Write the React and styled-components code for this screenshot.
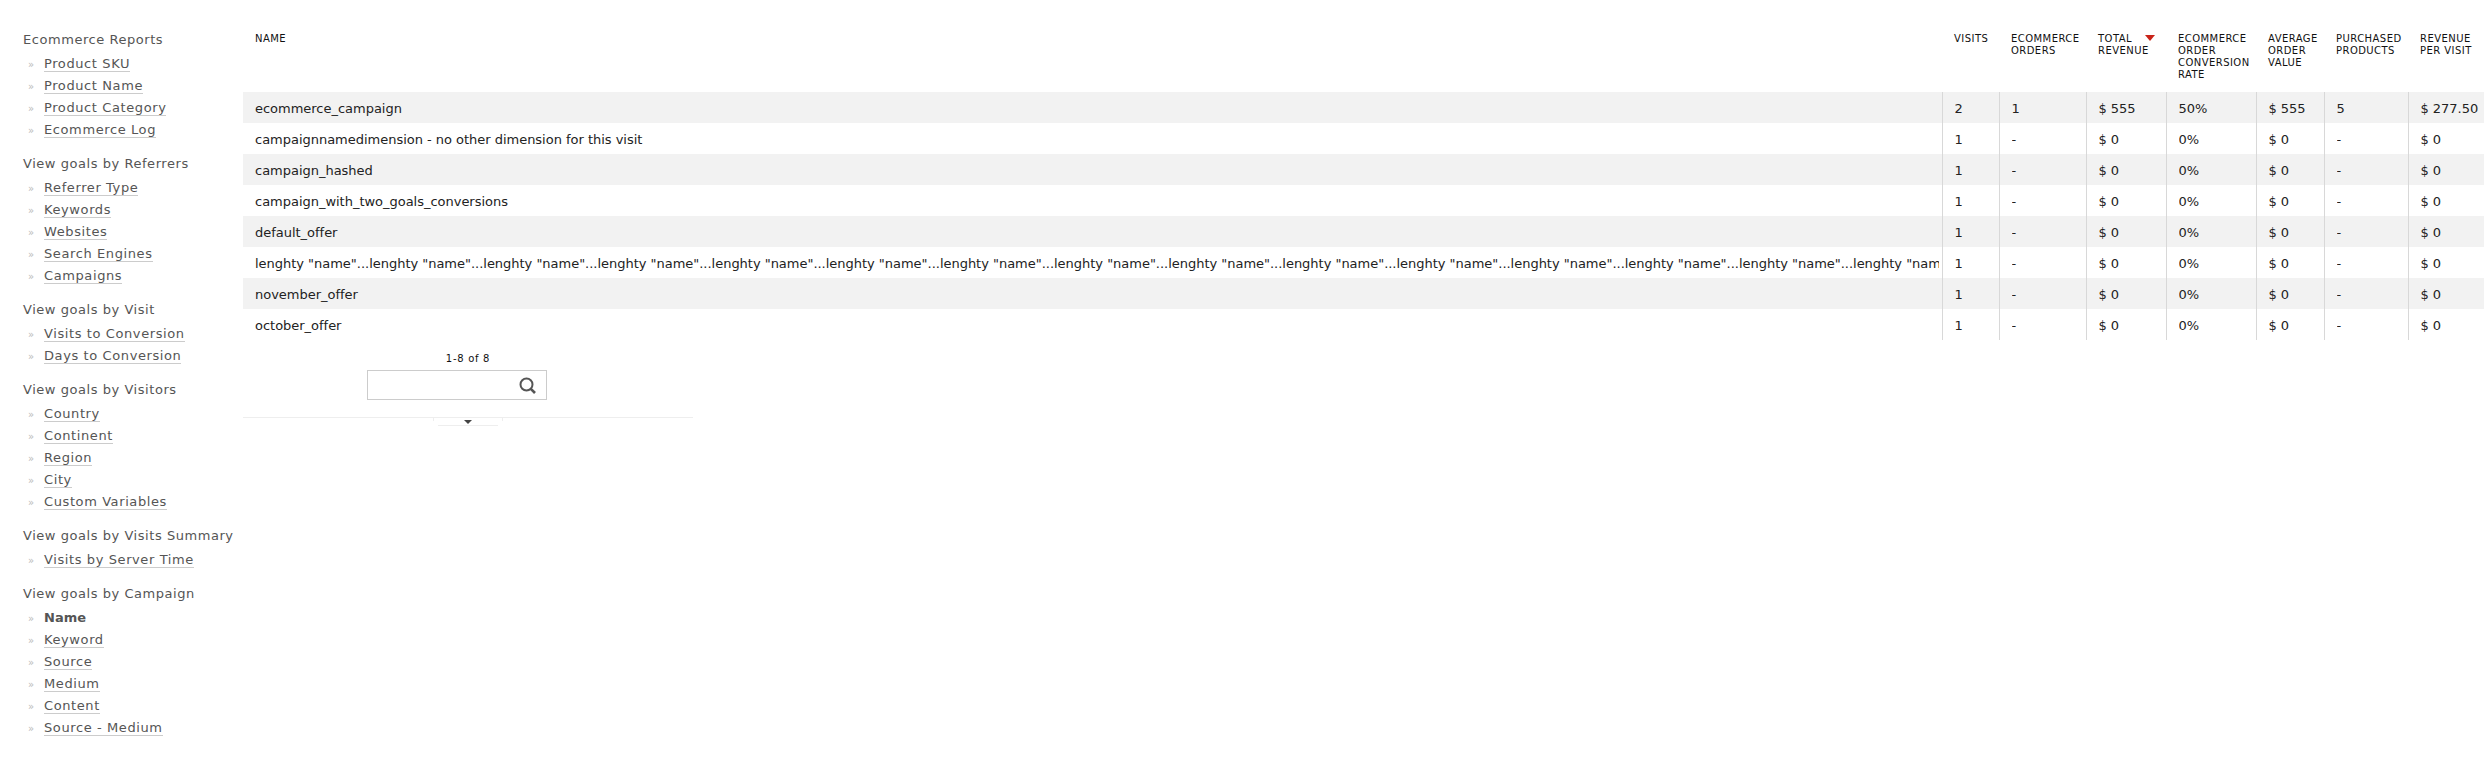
import React from "react";
import styled, { createGlobalStyle } from "styled-components";

const GlobalStyle = createGlobalStyle`
  html, body {
    margin: 0;
    overflow: hidden;
    background: #fff;
    font-family: "DejaVu Sans", Verdana, sans-serif;
  }
`;

const Page = styled.div`
  display: flex;
  align-items: flex-start;
  width: 2484px;
  height: 768px;
  overflow: hidden;
`;

const Sidebar = styled.nav`
  flex: 0 0 243px;
  box-sizing: border-box;
  padding: 29px 0 0 23px;
`;

const Group = styled.div`
  margin-bottom: 12px;
`;

const GroupTitle = styled.h3`
  margin: 0 0 2px;
  font-size: 13px;
  font-weight: normal;
  line-height: 22px;
  letter-spacing: 0.55px;
  color: #555;
  white-space: nowrap;
`;

const MenuList = styled.ul`
  list-style: none;
  margin: 0;
  padding: 0;
`;

const MenuItem = styled.li`
  display: flex;
  align-items: center;
  height: 22px;
  font-size: 13px;
  white-space: nowrap;

  &::before {
    content: "»";
    width: 21px;
    padding-left: 5px;
    box-sizing: border-box;
    font-size: 10px;
    color: #bbb;
  }
`;

const MenuLink = styled.a`
  color: #555;
  line-height: 15px;
  letter-spacing: ${(p) => (p.$active ? "0" : "0.6px")};
  border-bottom: ${(p) => (p.$active ? "1px solid transparent" : "1px solid #ccc")};
  font-weight: ${(p) => (p.$active ? "bold" : "normal")};
`;

const Content = styled.div`
  flex: 0 0 auto;
`;

const Table = styled.table`
  table-layout: fixed;
  width: 2248px;
  border-collapse: collapse;
`;

const HeadCell = styled.th`
  box-sizing: border-box;
  height: 92px;
  padding: 33px 0 0 12px;
  vertical-align: top;
  text-align: left;
  font-size: 10px;
  font-weight: normal;
  line-height: 12px;
  letter-spacing: 0.45px;
  text-transform: uppercase;
  color: #111;
`;

const SortArrow = styled.span`
  float: right;
  margin: 2px 11px 0 0;
  border-left: 5px solid transparent;
  border-right: 5px solid transparent;
  border-top: 6px solid #c92318;
`;

const Row = styled.tr`
  background: ${(p) => (p.$striped ? "#f2f2f2" : "#fff")};
`;

const Cell = styled.td`
  box-sizing: border-box;
  height: 31px;
  padding: 1px 3px 0 12px;
  overflow: hidden;
  white-space: nowrap;
  font-size: 13px;
  color: #222;

  & + & {
    border-left: 1px solid #d8d8d8;
  }
`;

const CellText = styled.span`
  display: block;
  overflow: hidden;
  letter-spacing: -0.02px;
`;

const Footer = styled.div`
  display: flex;
  flex-direction: column;
  align-items: center;
  width: 450px;
`;

const Pager = styled.div`
  margin-top: 13px;
  font-size: 10px;
  line-height: 12px;
  letter-spacing: 0.7px;
  color: #111;
`;

const SearchBox = styled.div`
  display: flex;
  align-items: center;
  justify-content: flex-end;
  box-sizing: border-box;
  width: 180px;
  height: 30px;
  margin: 5px 22px 0 0;
  padding-right: 10px;
  border: 1px solid #ccc;
  color: #555;
`;

const Expander = styled.div`
  display: flex;
  justify-content: center;
  align-self: stretch;
  margin-top: 17px;
  border-top: 1px solid #eee;
`;

const ExpandNotch = styled.div`
  position: relative;
  display: flex;
  justify-content: center;
  width: 70px;

  &::before,
  &::after {
    content: "";
    position: absolute;
    top: 0;
    width: 1px;
    height: 3px;
    background: #eee;
  }

  &::before {
    left: 0;
  }

  &::after {
    right: 0;
  }
`;

const ExpandTab = styled.div`
  display: flex;
  justify-content: center;
  box-sizing: border-box;
  width: 60px;
  height: 8px;
  padding-top: 2px;
  border-bottom: 1px solid #eee;
`;

const ExpandArrow = styled.span`
  width: 0;
  height: 0;
  border-left: 4px solid transparent;
  border-right: 4px solid transparent;
  border-top: 4px solid #444;
`;

const columns = [
  { label: "Name", width: 1699 },
  { label: "Visits", width: 57 },
  { label: "Ecommerce Orders", width: 87 },
  { label: "Total Revenue", width: 80, sorted: true },
  { label: "Ecommerce Order Conversion Rate", width: 90 },
  { label: "Average Order Value", width: 68 },
  { label: "Purchased Products", width: 84 },
  { label: "Revenue per visit", width: 83 },
];

const rows = [
  ["ecommerce_campaign", "2", "1", "$ 555", "50%", "$ 555", "5", "$ 277.50"],
  ["campaignnamedimension - no other dimension for this visit", "1", "-", "$ 0", "0%", "$ 0", "-", "$ 0"],
  ["campaign_hashed", "1", "-", "$ 0", "0%", "$ 0", "-", "$ 0"],
  ["campaign_with_two_goals_conversions", "1", "-", "$ 0", "0%", "$ 0", "-", "$ 0"],
  ["default_offer", "1", "-", "$ 0", "0%", "$ 0", "-", "$ 0"],
  ['lenghty "name"...'.repeat(16), "1", "-", "$ 0", "0%", "$ 0", "-", "$ 0"],
  ["november_offer", "1", "-", "$ 0", "0%", "$ 0", "-", "$ 0"],
  ["october_offer", "1", "-", "$ 0", "0%", "$ 0", "-", "$ 0"],
];

const menu = [
  { title: "Ecommerce Reports", items: ["Product SKU", "Product Name", "Product Category", "Ecommerce Log"] },
  { title: "View goals by Referrers", items: ["Referrer Type", "Keywords", "Websites", "Search Engines", "Campaigns"] },
  { title: "View goals by Visit", items: ["Visits to Conversion", "Days to Conversion"] },
  { title: "View goals by Visitors", items: ["Country", "Continent", "Region", "City", "Custom Variables"] },
  { title: "View goals by Visits Summary", items: ["Visits by Server Time"] },
  { title: "View goals by Campaign", items: ["Name", "Keyword", "Source", "Medium", "Content", "Source - Medium"], active: "Name" },
];

function App() {
  return (
    <Page>
      <GlobalStyle />
      <Sidebar>
        {menu.map((group) => (
          <Group key={group.title}>
            <GroupTitle>{group.title}</GroupTitle>
            <MenuList>
              {group.items.map((item) => (
                <MenuItem key={item}>
                  <MenuLink $active={group.active === item}>{item}</MenuLink>
                </MenuItem>
              ))}
            </MenuList>
          </Group>
        ))}
      </Sidebar>
      <Content>
        <Table>
          <colgroup>
            {columns.map((col) => (
              <col key={col.label} width={col.width} />
            ))}
          </colgroup>
          <thead>
            <tr>
              {columns.map((col) => (
                <HeadCell key={col.label}>
                  {col.sorted && <SortArrow />}
                  {col.label}
                </HeadCell>
              ))}
            </tr>
          </thead>
          <tbody>
            {rows.map((row, i) => (
              <Row key={row[0]} $striped={i % 2 === 0}>
                {row.map((value, j) => (
                  <Cell key={j}>
                    <CellText>{value}</CellText>
                  </Cell>
                ))}
              </Row>
            ))}
          </tbody>
        </Table>
        <Footer>
          <Pager>1-8 of 8</Pager>
          <SearchBox>
            <svg width="17" height="17" viewBox="0 0 17 17" fill="none" stroke="currentColor">
              <circle cx="7.5" cy="7.5" r="6" strokeWidth="2" />
              <path d="M11.8 11.8 L16 16" strokeWidth="2.6" />
            </svg>
          </SearchBox>
          <Expander>
            <ExpandNotch>
              <ExpandTab>
                <ExpandArrow />
              </ExpandTab>
            </ExpandNotch>
          </Expander>
        </Footer>
      </Content>
    </Page>
  );
}

export default App;
